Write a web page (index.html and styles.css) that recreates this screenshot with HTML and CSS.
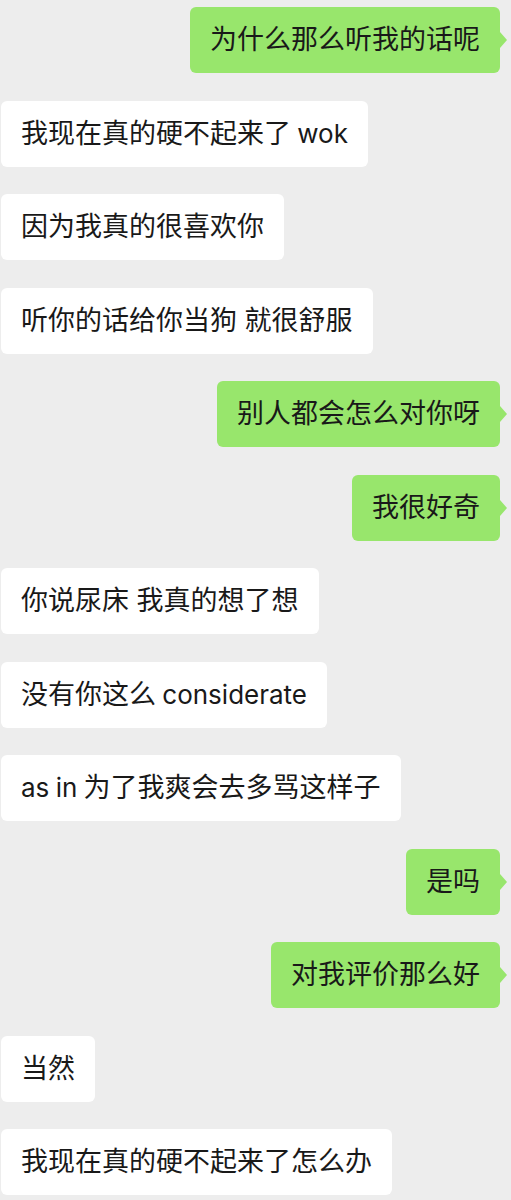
FILE: index.html
```html
<!DOCTYPE html>
<html lang="zh-CN">
<head>
    <meta charset="UTF-8">
    <meta name="viewport" content="width=device-width, initial-scale=1.0">
    <title>聊天</title>
    <link rel="stylesheet" href="styles.css">
</head>
<body>

<div class="chat">
    <div class="msg me"><div class="bubble">为什么那么听我的话呢</div></div>
    <div class="msg them"><div class="bubble">我现在真的硬不起来了<span class="en"> wok</span></div></div>
    <div class="msg them"><div class="bubble">因为我真的很喜欢你</div></div>
    <div class="msg them"><div class="bubble">听你的话给你当狗 就很舒服</div></div>
    <div class="msg me"><div class="bubble">别人都会怎么对你呀</div></div>
    <div class="msg me"><div class="bubble">我很好奇</div></div>
    <div class="msg them"><div class="bubble">你说尿床 我真的想了想</div></div>
    <div class="msg them"><div class="bubble">没有你这么<span class="en"> considerate</span></div></div>
    <div class="msg them"><div class="bubble"><span class="en">as in </span>为了我爽会去多骂这样子</div></div>
    <div class="msg me"><div class="bubble">是吗</div></div>
    <div class="msg me"><div class="bubble">对我评价那么好</div></div>
    <div class="msg them"><div class="bubble">当然</div></div>
    <div class="msg them"><div class="bubble">我现在真的硬不起来了怎么办</div></div>
</div>

</body>
</html>
```

FILE: styles.css
```css
body {
    margin: 0;
    padding: 0;
    background-color: #ededed;
    font-family: "Inter", "Noto Sans CJK SC", sans-serif;
    color: #191919;
}

.chat {
    display: flex;
    flex-direction: column;
    gap: 27.5px;
    padding-top: 7px;
}

.msg {
    display: flex;
}

.msg.me {
    justify-content: flex-end;
    padding-right: 11px;
}

.msg.them {
    justify-content: flex-start;
    padding-left: 1px;
}

.bubble {
    position: relative;
    padding: 15px 20px;
    font-size: 27px;
    line-height: 36px;
    border-radius: 6px;
    white-space: nowrap;
}

/* latin words render a bit narrower than the CJK around them */
.en {
    font-size: 26px;
    word-spacing: -1px;
}

.them .bubble {
    background-color: #fff;
}

.me .bubble {
    background-color: #98e66c;
}

/* little tail on the right side of my bubbles */
.me .bubble::after {
    content: "";
    position: absolute;
    right: -7px;
    top: 50%;
    margin-top: -8px;
    border-top: 8px solid transparent;
    border-bottom: 8px solid transparent;
    border-left: 7px solid #98e66c;
}
```
